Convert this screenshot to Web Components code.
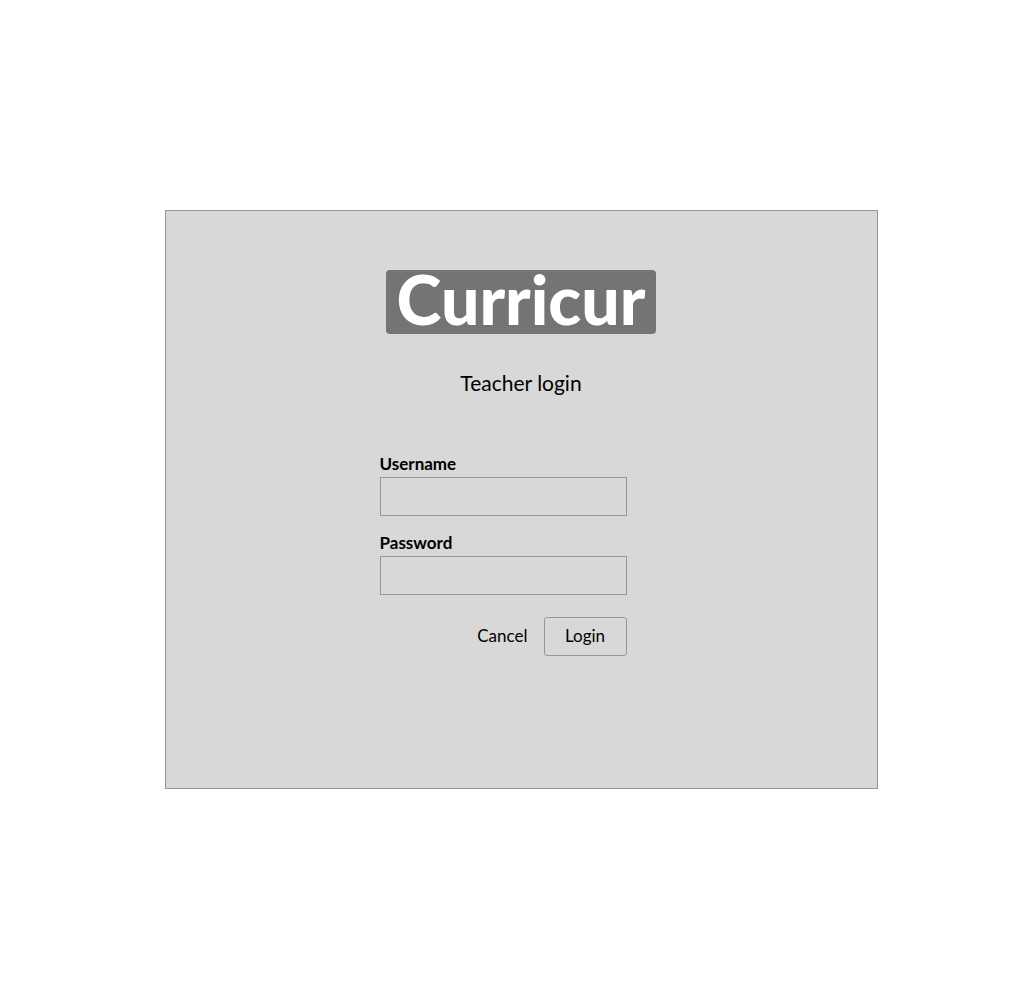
<!DOCTYPE html>
<html lang="en">
<head>
<meta charset="utf-8">
<meta name="viewport" content="width=device-width, initial-scale=1">
<title>Curricur – Teacher login</title>
<style>
html, body { margin: 0; background: #fff; }
body { font-family: Lato, "Open Sans", sans-serif; font-size: 17px; color: #000; }
</style>
</head>
<body>
<login-page></login-page>
<script>
const define = (name, html, setup) => {
  const template = document.createElement('template');
  template.innerHTML = '<style>*{box-sizing:border-box}:host{box-sizing:border-box}</style>' + html;
  customElements.define(name, class extends HTMLElement {
    constructor() {
      super();
      this.attachShadow({ mode: 'open' }).append(template.content.cloneNode(true));
    }
    connectedCallback() { if (setup) setup(this, this.shadowRoot); }
  });
};

define('brand-logo', `
<style>
:host { display: block; width: 270px; max-width: 100%; }
h1 { margin: 0; padding-bottom: 6px; background: #747474; color: #fff; border-radius: 4px; font-size: 68px; line-height: 58px; font-weight: 900; text-align: center; }
</style>
<h1><slot></slot></h1>`);

define('text-field', `
<style>
:host { display: block; }
label { display: block; padding-bottom: 2px; font-weight: 700; line-height: 22px; }
input { display: block; width: 100%; height: 39px; padding: 0 8px; border: 1px solid #979797; border-radius: 0; background: transparent; font: inherit; color: inherit; }
</style>
<label for="field"></label>
<input id="field">`, (host, root) => {
  root.querySelector('label').textContent = host.getAttribute('label');
  const input = root.querySelector('input');
  input.type = host.getAttribute('type') || 'text';
  input.name = host.getAttribute('name');
});

define('action-button', `
<style>
:host { display: block; }
button { display: block; height: 39px; padding: 0 15px 2px; border: 1px solid transparent; border-radius: 3px; background: transparent; font: inherit; color: inherit; cursor: pointer; }
:host([outlined]) button { min-width: 83px; border-color: #979797; }
</style>
<button type="button"><slot></slot></button>`);

define('login-form', `
<style>
:host { display: block; width: 247px; max-width: 100%; }
form { display: grid; gap: 16px; }
.actions { display: flex; justify-content: flex-end; padding-top: 6px; }
</style>
<form>
  <text-field label="Username" name="username"></text-field>
  <text-field label="Password" name="password" type="password"></text-field>
  <div class="actions">
    <action-button>Cancel</action-button>
    <action-button outlined>Login</action-button>
  </div>
</form>`);

define('login-card', `
<style>
:host { display: flex; flex-direction: column; align-items: center; width: 100%; max-width: 713px; padding: 59px 24px 132px; background: #d8d8d8; border: 1px solid #979797; }
h2 { margin: 36px 0 57px; font-size: 21px; line-height: 26px; font-weight: 400; }
.form { max-width: 100%; padding-right: 36px; }
</style>
<brand-logo>Curricur</brand-logo>
<h2>Teacher login</h2>
<div class="form"><login-form></login-form></div>`);

define('login-page', `
<style>
:host { display: block; }
main { display: flex; justify-content: center; align-items: center; min-height: 100vh; padding: 16px 0 16px 18px; }
</style>
<main><login-card></login-card></main>`);
</script>
</body>
</html>
